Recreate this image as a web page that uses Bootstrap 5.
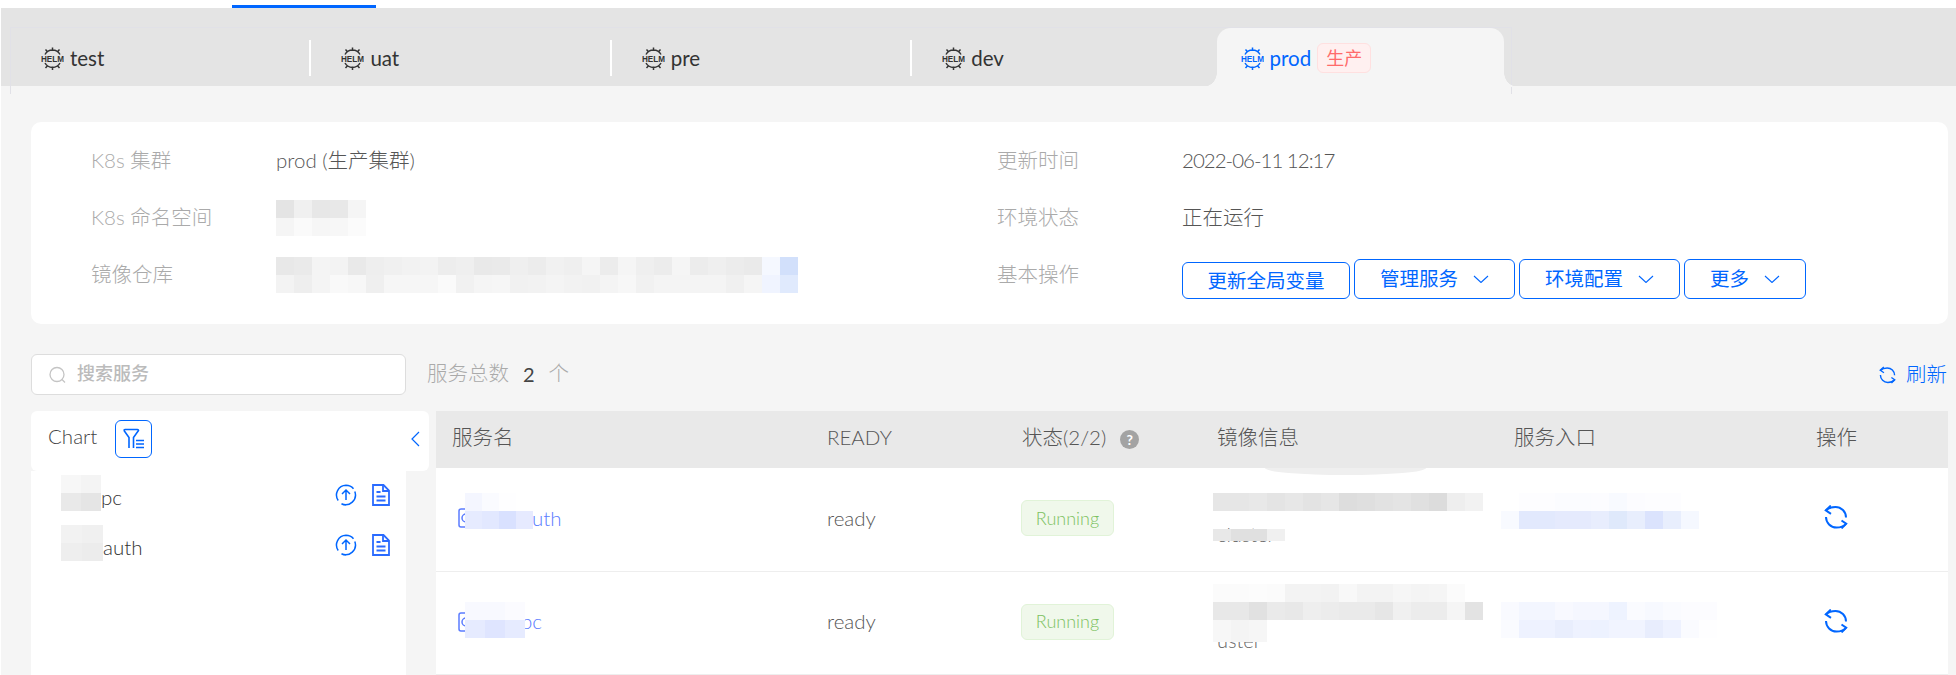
<!DOCTYPE html>
<html lang="zh">
<head>
  <title>prod - 环境详情</title>
  <meta charset="utf-8">
  <meta name="viewport" content="width=device-width, initial-scale=1">
  <link href="https://cdn.jsdelivr.net/npm/bootstrap@5.3.1/dist/css/bootstrap.min.css" rel="stylesheet">
  <style>
html, body { height: 675px; overflow: hidden; }
body {
  background: #f5f5f5;
  color: #555;
  font-family: Lato, "Noto Sans CJK SC", sans-serif;
  font-size: 20.5px;
  font-weight: 300;
}
svg { flex: none; }

/* Top strip */
.top-band { height: 8px; background: #fff; padding: 5px 0 0 232px; }
.top-band-bar { width: 144px; height: 3px; background: #0066ff; }
.page-wrap { border-left: 1px solid #fff; height: 667px; }

/* Env tabs */
.env-strip { height: 78px; background: #e4e4e4; padding: 19px 0 0 9px; }
.env-tabs { width: 1502px; height: 67px; border: 1px solid #e1e1e7; border-bottom: 0; }
.env-tab { width: 300.4px; height: 66px; padding: 12px 0 0 0; color: #333; font-weight: 400; }
.env-tab-inner { height: 36px; padding-left: 30px; gap: 6px; border-right: 2px solid #fff; }
.env-tab-last .env-tab-inner { border-right: 0; }
.env-tab-on { position: relative; width: 287px; height: 59px; margin-left: 4px; background: #f5f5f5; border-radius: 14px 14px 0 0; color: #0066ff; }
.env-tab-on .env-tab-inner { padding-left: 24px; gap: 6px; border: 0; }
.env-tab-on::before, .env-tab-on::after { content: ""; position: absolute; bottom: 0; width: 14px; height: 14px; }
.env-tab-on::before { left: -14px; background: radial-gradient(circle at 0 0, transparent 13.5px, #f5f5f5 14px); }
.env-tab-on::after { right: -14px; background: radial-gradient(circle at 100% 0, transparent 13.5px, #f5f5f5 14px); }
.tag-prod { height: 30px; width: 54px; border: 1px solid #ffe0e0; border-radius: 6px; background: #fff0f0; color: #ff6b6b; font-size: 18px; font-weight: 400; }

/* Info card */
.main-area { padding: 36px 8px 0 30px; }
.info-card { height: 202px; background: #fff; border-radius: 10px; padding: 10px 0 0 60px; }
.info-col { width: 906px; }
.info-row { height: 57px; }
.info-label { width: 185px; color: #aaa; }
.info-value { color: #555; }
.date-text { letter-spacing: -1px; }
.mosaic { display: grid; grid-auto-flow: row; width: max-content; }
.mosaic-line { display: flex; }
.mosaic-line span { display: block; width: var(--cw, 18px); height: var(--ch, 18px); }
.act-btn {
  --bs-btn-color: #0066ff;
  --bs-btn-border-color: #0066ff;
  --bs-btn-hover-bg: #0066ff;
  --bs-btn-hover-border-color: #0066ff;
  height: 40px;
  padding: 0 25px;
  gap: 15px;
  font-size: 19.5px;
  line-height: 1;
  border-radius: 6px;
  background: #fff;
}
.act-btn-short { height: 37px; width: 168px; padding: 0; }
.act-group { gap: 4px; margin-top: -8px; height: 57px; }

/* Toolbar */
.tool-row { height: 41px; margin-top: 30px; }
.search-box { width: 375px; height: 41px; border: 1px solid #ddd; border-radius: 6px; background: #fff; padding-left: 17px; gap: 11px; }
.search-box input { border: 0; outline: 0; padding: 0 0 3px; font-size: 18px; font-weight: 500; width: 280px; background: transparent; }
.search-box input::placeholder { color: #bbb; }
.svc-count { margin-left: 21px; padding-bottom: 2px; color: #aaa; gap: 14px; }
.svc-count b { font-weight: 400; color: #444; font-size: 20px; }
.refresh-link { color: #0066ff; text-decoration: none; gap: 10px; margin-right: 1px; }

/* Chart sidebar */
.panel-row { margin-top: 16px; gap: 7px; }
.chart-side { width: 398px; }
.chart-head { height: 60px; background: #fff; border-radius: 6px; padding: 0 9px 4px 17px; color: #444; }
.chart-title { margin-top: -6px; }
.filter-btn { width: 37px; height: 38px; padding: 0; margin-left: 18px; border: 1px solid #0066ff; border-radius: 6px; background: #fff; }
.chart-list { width: 375px; height: 210px; background: #fff; border: 0; border-radius: 0; padding-top: 1px; }
.chart-item { height: 50px; padding: 0 16px 0 30px; border: 0; background: transparent; color: #333; font-weight: 300; }
.chart-item .mosaic { margin-top: -8px; }
.chart-item-icons { gap: 15px; margin-left: auto; margin-top: -4px; }

/* Services table */
.svc-table { width: 512px; flex: 1; table-layout: fixed; margin: 0; --bs-table-bg: #fff; }
.svc-table th { height: 57px; padding: 0 0 4px 16px; background: #e9e9e9; color: #555; font-weight: 300; border: 0; vertical-align: middle; }
.svc-table td { height: 103px; padding: 0 0 2px 16px; color: #555; border-bottom: 1px solid #eee; vertical-align: middle; position: relative; font-weight: 300; }
.svc-link { color: #5b7cff; text-decoration: none; }
.name-cell svg { margin-left: 6px; }
.name-cell .svc-link { margin-left: 58px; }
.name-cell-b .svc-link { margin-left: 47px; }
.name-blur { position: absolute; left: 29px; top: 25px; }
.name-blur-b { top: 30px; }
.run-tag { display: inline-flex; align-items: center; justify-content: center; width: 93px; height: 36px; margin-left: -1px; background: #f0f8eb; border: 1px solid #e1f3d8; border-radius: 6px; color: #7cc160; font-size: 18px; }
.help-dot { width: 19px; height: 19px; border-radius: 50%; background: #a3a3a3; color: #fff; font-size: 14px; font-weight: 700; margin-left: 14px; }
.img-blur { position: absolute; left: 12px; }
.img-a { top: 25px; }
.img-a2 { top: 61px; --ch: 12px; }
.img-b { top: 12px; height: 58px; overflow: hidden; }
.img-text { position: absolute; left: 16px; font-size: 20px; color: #666; line-height: 1; }
.img-text-a { top: 56px; }
.img-text-b { top: 58px; }
.img-smudge { position: absolute; left: 64px; top: 0; width: 161px; height: 7px; background: #efefef; border-radius: 0 0 50% 50% / 0 0 100% 100%; }
.entry-blur { position: absolute; left: 3px; top: 25px; }
.entry-blur-b { top: 30px; }
.op-cell { padding-left: 24px !important; padding-bottom: 9px !important; }
  </style>
</head>
<body>

<svg class="d-none">
  <symbol id="i-helm" viewBox="0 0 23 23">
    <g fill="none" stroke="currentColor" stroke-width="1.5">
      <path d="M4 7.500A8.600 8.600 0 0 1 19 7.500M11.500 .5v3.500M4.500 2.500l2 2.200M18.500 2.500l-2 2.200"/>
      <path d="M4 16A8.600 8.600 0 0 0 19 16M11.500 23v-3.500M4.500 21l2-2.200M18.500 21l-2-2.200"/>
    </g>
    <text x="11.500" y="14.800" text-anchor="middle" textLength="23" lengthAdjust="spacingAndGlyphs" font-family="Liberation Sans, sans-serif" font-size="9" font-weight="700" fill="currentColor">HELM</text>
  </symbol>
  <symbol id="i-upgrade" viewBox="0 0 22 24">
    <path d="M3.200 17.500A9.800 9.800 0 0 1 11 2.200c3 0 5.700 1.300 7.500 3.500M19.800 8.500A9.800 9.800 0 0 1 6.500 20.800c1.400.8 2.900 1.200 4.500 1.200" fill="none" stroke="#0066ff" stroke-width="1.500"/>
    <path d="M11 17V7.500M7 11l4-4 4 4" fill="none" stroke="#0066ff" stroke-width="1.500"/>
  </symbol>
  <symbol id="i-doc" viewBox="0 0 18 22">
    <path d="M1 1h10.500L17 6.500V21H1z" fill="none" stroke="#2a6bff" stroke-width="1.800"/>
    <path d="M11 1v6h6M4.500 8h4M4.500 12.500h9M4.500 16.500h9" fill="none" stroke="#2a6bff" stroke-width="1.800"/>
  </symbol>
  <symbol id="i-sync" viewBox="0 0 24 24">
    <path d="M2 5.500C4 3.500 7.500 2 11.500 2A10.500 10.500 0 0 1 22 12.500M2 12A10.500 10.500 0 0 0 12.500 22.500C16.500 22.500 20 21 22 18.800" fill="none" stroke="#0066ff" stroke-width="2"/>
    <path d="M6.800 .6L1.800 5.300 7 8.800M17.500 15.500L22.200 18.700 17.500 23.400" fill="none" stroke="#0066ff" stroke-width="2"/>
  </symbol>
  <symbol id="i-pod" viewBox="0 0 16 20">
    <path d="M8 1H3a2 2 0 0 0-2 2v14a2 2 0 0 0 2 2h5M8 6a4 4 0 0 0 0 8" fill="none" stroke="#5b7cff" stroke-width="1.500"/>
  </symbol>
  <symbol id="i-chev" viewBox="0 0 16 8">
    <path d="M1 1l7 6.500L15 1" fill="none" stroke="#0066ff" stroke-width="1.100"/>
  </symbol>
</svg>

<div class="top-band"><div class="top-band-bar"></div></div>

<div class="page-wrap">
  <div class="env-strip">
    <div class="env-tabs d-flex">
      <div class="env-tab"><div class="env-tab-inner d-flex align-items-center"><svg width="23" height="23"><use href="#i-helm"/></svg>test</div></div>
      <div class="env-tab"><div class="env-tab-inner d-flex align-items-center"><svg width="23" height="23"><use href="#i-helm"/></svg>uat</div></div>
      <div class="env-tab"><div class="env-tab-inner d-flex align-items-center"><svg width="23" height="23"><use href="#i-helm"/></svg>pre</div></div>
      <div class="env-tab env-tab-last"><div class="env-tab-inner d-flex align-items-center"><svg width="23" height="23"><use href="#i-helm"/></svg>dev</div></div>
      <div class="env-tab env-tab-last env-tab-on"><div class="env-tab-inner d-flex align-items-center"><svg width="23" height="23"><use href="#i-helm"/></svg>prod<span class="tag-prod d-inline-flex align-items-center justify-content-center">生产</span></div></div>
    </div>
  </div>

  <div class="main-area">
    <div class="info-card d-flex">
      <div class="info-col">
        <div class="info-row d-flex align-items-center"><div class="info-label">K8s 集群</div><div class="info-value">prod (生产集群)</div></div>
        <div class="info-row d-flex align-items-center"><div class="info-label">K8s 命名空间</div><div class="mosaic" data-cells="e4 f0 e7 e8 f5|f5 fa f6 f7 fb"></div></div>
        <div class="info-row d-flex align-items-center"><div class="info-label">镜像仓库</div><div class="mosaic" data-cells="e8 ea f4 f3 e9 ee f0 f2 f3 ed ef e9 ea ef ec f1 ef f5 ec f5 ef ec f5 ec ef ec ea f5f8ff d2e0fb|f3 ee f4 f9 f7 ef f6 f6 f6 fa f1 f5 f6 f1 f2 f4 f2 f1 f4 f7 f1 f4 f4 f4 f4 f0 f5 f0f4ff e0eafd"></div></div>
      </div>
      <div class="flex-grow-1">
        <div class="info-row d-flex align-items-center"><div class="info-label">更新时间</div><div class="info-value date-text">2022-06-11 12:17</div></div>
        <div class="info-row d-flex align-items-center"><div class="info-label">环境状态</div><div class="info-value">正在运行</div></div>
        <div class="info-row d-flex align-items-center">
          <div class="info-label">基本操作</div>
          <div class="act-group d-flex align-items-end">
            <button class="btn act-btn act-btn-short" type="button">更新全局变量</button>
            <button class="btn act-btn d-inline-flex align-items-center" type="button">管理服务<svg width="16" height="8"><use href="#i-chev"/></svg></button>
            <button class="btn act-btn d-inline-flex align-items-center" type="button">环境配置<svg width="16" height="8"><use href="#i-chev"/></svg></button>
            <button class="btn act-btn d-inline-flex align-items-center" type="button">更多<svg width="16" height="8"><use href="#i-chev"/></svg></button>
          </div>
        </div>
      </div>
    </div>

    <div class="tool-row d-flex align-items-center">
      <div class="search-box d-flex align-items-center">
        <svg width="17" height="18" viewBox="0 0 17 18"><circle cx="8" cy="8.500" r="7" fill="none" stroke="#c4c4c4" stroke-width="1.300"/><path d="M13 13.500l3 3" stroke="#c4c4c4" stroke-width="1.300"/></svg>
        <input type="text" placeholder="搜索服务">
      </div>
      <div class="svc-count d-flex align-items-center"><span>服务总数</span><b>2</b><span>个</span></div>
      <a class="refresh-link d-flex align-items-center ms-auto" href="#">
        <svg width="17" height="18"><use href="#i-sync"/></svg>
        刷新
      </a>
    </div>

    <div class="panel-row d-flex align-items-start">
      <div class="chart-side">
        <div class="chart-head d-flex align-items-center">
          <span class="chart-title">Chart</span>
          <button class="filter-btn d-inline-flex align-items-center justify-content-center" type="button">
            <svg width="22" height="22" viewBox="0 0 22 22"><path d="M1 2.500a1 1 0 0 1 1-1h12.500a1 1 0 0 1 1 1L10.500 9.500V20M6 20V9.500L1 2.500" fill="none" stroke="#0066ff" stroke-width="1.600"/><path d="M13 12.500h8M13 16h8M13 19.500h8" stroke="#0066ff" stroke-width="1.400"/></svg>
          </button>
          <svg class="ms-auto" width="9" height="16" viewBox="0 0 9 16"><path d="M8 1L1 8l7 7" fill="none" stroke="#0066ff" stroke-width="1.200"/></svg>
        </div>
        <ul class="list-group list-group-flush chart-list">
          <li class="list-group-item chart-item d-flex align-items-center">
            <div class="mosaic" data-cw="20" data-cells="f7 f4|e9 e5"></div>
            <span>pc</span>
            <div class="chart-item-icons d-flex align-items-center"><svg width="22" height="24"><use href="#i-upgrade"/></svg><svg width="18" height="22"><use href="#i-doc"/></svg></div>
          </li>
          <li class="list-group-item chart-item d-flex align-items-center">
            <div class="mosaic" data-cw="21" data-cells="f2 f0|ee ec"></div>
            <span>auth</span>
            <div class="chart-item-icons d-flex align-items-center"><svg width="22" height="24"><use href="#i-upgrade"/></svg><svg width="18" height="22"><use href="#i-doc"/></svg></div>
          </li>
        </ul>
      </div>

      <table class="table svc-table">
        <thead>
          <tr>
            <th style="width:375px">服务名</th>
            <th style="width:195px">READY</th>
            <th style="width:195px">状态(2/2)<span class="help-dot d-inline-flex align-items-center justify-content-center">?</span></th>
            <th style="width:297px">镜像信息</th>
            <th style="width:302px">服务入口</th>
            <th>操作</th>
          </tr>
        </thead>
        <tbody>
          <tr>
            <td>
              <div class="name-cell d-flex align-items-center"><svg width="16" height="20"><use href="#i-pod"/></svg><a class="svc-link" href="#">uth</a></div>
              <div class="mosaic name-blur" data-cw="17" data-cells="f4f6ff fafbff fefeff ffffff|e6ebff e2e8ff d9e1ff e6eaff"></div>
            </td>
            <td>ready</td>
            <td><span class="run-tag">Running</span></td>
            <td>
              <div class="img-smudge"></div>
              <div class="img-text img-text-a">cluster</div>
              <div class="mosaic img-blur img-a" data-cells="e6 e6 e8 e4 e7 e3 e6 dd df e2 e4 e0 dc ee f2"></div>
              <div class="mosaic img-blur img-a2" data-cells="e8 e0 e0 f0"></div>
            </td>
            <td><div class="mosaic entry-blur" data-cells="ffffff fdfdff fdfdff fbfcff fbfcff fcfcff f8faff fcfcff fdfdff fdfdff ffffff ffffff|f8faff e2e9fd e2e9fd e5eafd e5eafd e8edfd dfe9fb e8eefd dbe3fd e8eefd f5f8ff ffffff"></div></td>
            <td class="op-cell"><svg width="24" height="24"><use href="#i-sync"/></svg></td>
          </tr>
          <tr>
            <td>
              <div class="name-cell name-cell-b d-flex align-items-center"><svg width="16" height="20"><use href="#i-pod"/></svg><a class="svc-link" href="#">pc</a></div>
              <div class="mosaic name-blur name-blur-b" data-cw="20" data-cells="f8f9ff f8f9ff fbfbff|e6ebff dfe5ff e6ebff"></div>
            </td>
            <td>ready</td>
            <td><span class="run-tag">Running</span></td>
            <td>
              <div class="img-text img-text-b">uster</div>
              <div class="mosaic img-blur img-b" data-cells="fb fb fc fb f3 f3 f2 f8 f3 f3 f6 f4 f5 fb|e8 e8 e1 ea e8 ee ec ea ea e6 f0 ec ec f5 e3|f7 f4 f6|f7 f4 f6"></div>
            </td>
            <td><div class="mosaic entry-blur entry-blur-b" data-cells="f9faff f3f6ff f3f6ff f8f9ff f5f7ff f5f7ff eef3ff fafbff f7f9ff fafbff fcfcff fcfcff|fafbff eef2ff eef2ff e9eefd eef2ff edf2ff f1f4ff f1f4ff e8edfd eef2ff fafbff fefeff"></div></td>
            <td class="op-cell"><svg width="24" height="24"><use href="#i-sync"/></svg></td>
          </tr>
        </tbody>
      </table>
    </div>
  </div>
</div>

<script>
  // pixelated blur blocks: rows split by |, two digit value means a grey
  document.querySelectorAll(".mosaic").forEach(function (block) {
    if (block.dataset.cw) block.style.setProperty("--cw", block.dataset.cw + "px");
    block.dataset.cells.split("|").forEach(function (row) {
      const line = document.createElement("div");
      line.className = "mosaic-line";
      row.split(" ").forEach(function (tone) {
        const cell = document.createElement("span");
        cell.style.background = "#" + (tone.length === 2 ? tone + tone + tone : tone);
        line.appendChild(cell);
      });
      block.appendChild(line);
    });
  });
</script>
<script src="https://cdn.jsdelivr.net/npm/bootstrap@5.3.1/dist/js/bootstrap.bundle.min.js"></script>
</body>
</html>
